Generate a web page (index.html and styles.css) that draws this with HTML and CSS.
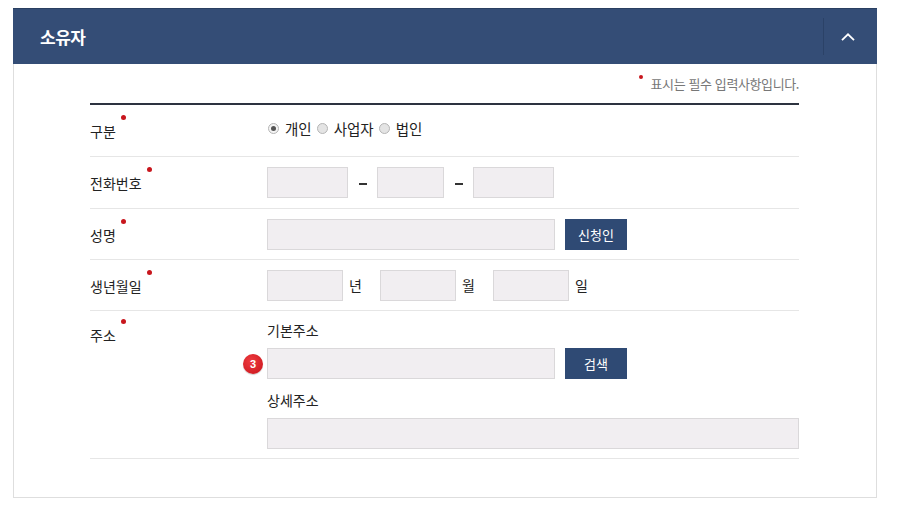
FILE: index.html
```html
<!DOCTYPE html>
<html lang="ko">
<head>
<meta charset="utf-8">
<link rel="stylesheet" href="styles.css">
</head>
<body>
<div class="panel">
  <div class="panel-head">
    <h2 class="panel-title">소유자</h2>
    <div class="panel-toggle">
      <svg width="14" height="8" viewBox="0 0 14 8"><path d="M1 7.2 L7 1.3 L13 7.2" fill="none" stroke="#fff" stroke-width="1.8"/></svg>
    </div>
  </div>
  <div class="panel-body">
    <p class="note"><span class="note-dot"></span>표시는 필수 입력사항입니다.</p>
    <div class="form">
      <div class="row r52">
        <div class="label"><span class="req">구분</span></div>
        <div class="value radios">
          <span class="radio checked"></span><span class="rtext">개인</span>
          <span class="radio"></span><span class="rtext">사업자</span>
          <span class="radio"></span><span class="rtext">법인</span>
        </div>
      </div>
      <div class="row r52">
        <div class="label"><span class="req">전화번호</span></div>
        <div class="value">
          <span class="input w81"></span><span class="dash"></span>
          <span class="input w67"></span><span class="dash"></span>
          <span class="input w81"></span>
        </div>
      </div>
      <div class="row">
        <div class="label"><span class="req">성명</span></div>
        <div class="value">
          <span class="input w287"></span>
          <button class="btn">신청인</button>
        </div>
      </div>
      <div class="row">
        <div class="label"><span class="req">생년월일</span></div>
        <div class="value">
          <span class="input w76"></span><span class="unit">년</span>
          <span class="input w76"></span><span class="unit">월</span>
          <span class="input w76"></span><span class="unit">일</span>
        </div>
      </div>
      <div class="row row-addr">
        <div class="label label-top"><span class="req">주소</span></div>
        <div class="value addr">
          <div class="sub">기본주소</div>
          <div class="line">
            <span class="input w287 has-badge"><span class="badge">3</span></span>
            <button class="btn">검색</button>
          </div>
          <div class="sub sub2">상세주소</div>
          <span class="input wfull"></span>
        </div>
      </div>
    </div>
  </div>
</div>
</body>
</html>
```
FILE: styles.css
```css
* { box-sizing: border-box; }
html, body { margin: 0; padding: 0; background: #fff; }
body {
  font-family: "Noto Sans CJK KR", "Noto Sans", sans-serif;
  color: #222;
  padding: 8px 23px 0 13px;
}
.panel { width: 864px; }
.panel-head {
  height: 56px;
  background: #344d76;
  display: flex;
  align-items: center;
  justify-content: space-between;
  border-top: 1px solid #2a3f61;
}
.panel-title {
  margin: 0 0 0 27px;
  color: #fff;
  font-size: 17px;
  font-weight: 700;
  letter-spacing: -0.5px;
}
.panel-toggle {
  width: 54px;
  height: 37px;
  border-left: 1px solid #2b4267;
  display: flex;
  align-items: center;
  justify-content: center;
  padding-right: 5px;
}
.panel-body {
  border: 1px solid #dedede;
  border-top: none;
  padding: 8px 77px 38px 76px;
}
.note {
  margin: 0;
  text-align: right;
  font-size: 13px;
  color: #777;
  height: 31px;
  line-height: 24px;
  letter-spacing: -0.4px;
}
.note-dot {
  display: inline-block;
  width: 4px; height: 4px;
  border-radius: 50%;
  background: #c8161d;
  margin-right: 8px;
  vertical-align: 10px;
}
.form { border-top: 2px solid #2d3340; }
.row {
  display: flex;
  align-items: center;
  min-height: 51px;
  border-bottom: 1px solid #e6e6e6;
}
.row.r52 { min-height: 52px; }
.label {
  width: 177px;
  flex: none;
  font-size: 14px;
  padding-top: 1px;
}
.req { position: relative; }
.req::after {
  content: "";
  position: absolute;
  right: -10px;
  top: -6px;
  width: 5px; height: 5px;
  border-radius: 50%;
  background: #c8161d;
}
.value { display: flex; align-items: center; font-size: 14px; }
.radios { padding-left: 1px; padding-bottom: 5px; font-size: 14.5px; }
.radio {
  width: 11px; height: 11px;
  border-radius: 50%;
  border: 1px solid #b5b5b5;
  background: #e4e4e4;
  margin-right: 6px;
  display: inline-flex;
  align-items: center;
  justify-content: center;
}
.radio.checked { background: #f4f4f4; }
.radio.checked::after {
  content: "";
  width: 5px; height: 5px;
  border-radius: 50%;
  background: #555;
}
.rtext { margin-right: 5px; }
.input {
  display: inline-block;
  height: 31px;
  background: #f1eef1;
  border: 1px solid #dad8da;
  position: relative;
}
.w81 { width: 81px; }
.w67 { width: 67px; }
.w76 { width: 76px; }
.w287 { width: 288px; }
.wfull { width: 532px; }
.dash {
  width: 29px;
  display: flex;
  justify-content: center;
}
.dash::before {
  content: "";
  width: 8px;
  height: 2px;
  background: #333;
  margin-top: 2px;
}
.unit { width: 37px; text-align: left; padding-left: 6px; }
.btn {
  margin-left: 10px;
  width: 62px;
  height: 31px;
  border: none;
  background: #2f4a74;
  color: #fff;
  font-family: inherit;
  font-size: 13px;
  padding: 0;
}
.row-addr { align-items: flex-start; padding: 12px 0 9px; }
.label-top { padding-top: 2px; }
.addr { flex-direction: column; align-items: flex-start; }
.sub { font-size: 14px; height: 25px; line-height: 15px; }
.sub2 { margin-top: 14px; height: 25px; }
.line { display: flex; align-items: center; }
.badge {
  position: absolute;
  left: -25px;
  top: 5px;
  width: 20px; height: 20px;
  border-radius: 50%;
  background: radial-gradient(circle at 40% 35%, #ee3b3f, #c8131b);
  color: #fff;
  font-family: "Liberation Sans", Arial, sans-serif;
  font-weight: 700;
  font-size: 11px;
  line-height: 20px;
  text-align: center;
  box-shadow: 0 1px 1px rgba(0,0,0,0.2);
}
```
